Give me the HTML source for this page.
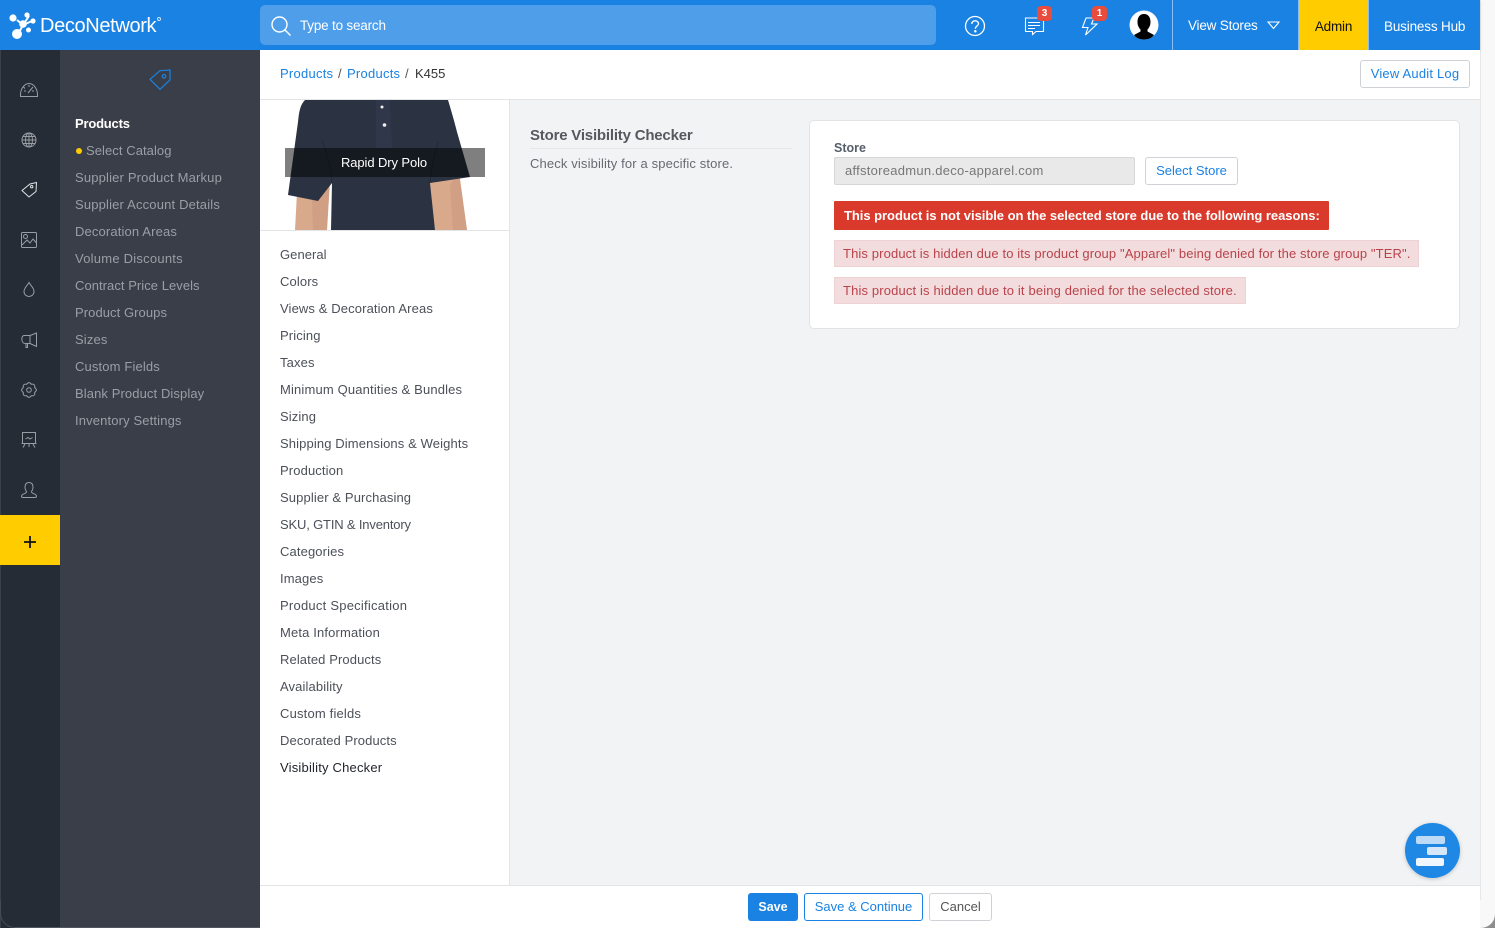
<!DOCTYPE html>
<html><head><meta charset="utf-8"><style>
html,body{margin:0;padding:0;width:1495px;height:928px;overflow:hidden;background:#f8f8f8;font-family:"Liberation Sans",sans-serif;font-size:13px;color:#4a4f57}
div,a,span{position:absolute;white-space:nowrap}
.s{left:75px;color:#9b9ea6;height:18px;line-height:18px;letter-spacing:.14px}
.n{left:280px;color:#4c5058;height:18px;line-height:18px;letter-spacing:.12px}
svg{position:absolute;overflow:visible}
.b{color:#1a82e2;background:#fff;border:1px solid #cfd2d6;border-radius:3px;box-sizing:border-box;text-align:center}
</style></head><body>
<div style="left:0;top:0;width:1480px;height:928px;background:#f2f3f5"></div>
<div style="left:1480px;top:0;width:15px;height:928px;background:#f8f8f8;border-left:1px solid #e8e8e8;box-sizing:border-box"></div>
<div style="left:1440px;top:888px;width:40px;height:40px;background:#fff"></div>
<div style="left:1470px;top:900px;width:25px;height:28px;background:#8e8e8e;"></div>
<div style="left:1470px;top:900px;width:25px;height:28px;background:#f8f8f8;border-bottom-right-radius:14px"></div>

<div style="left:0;top:0;width:1480px;height:50px;background:#1a82e2;box-shadow:0 1px 3px rgba(0,0,0,.15)"></div>
<svg style="left:9px;top:11px" width="28" height="29" viewBox="0 0 28 29" fill="#fff"><path d="M8 9L14 14M20 5L14 14M23 10L14 14M8 25L14 14" stroke="#fff" stroke-width="2"/><circle cx="4" cy="7" r="3.6"/><circle cx="18" cy="4" r="2.6"/><circle cx="24" cy="10" r="2.6"/><circle cx="14" cy="13" r="3.8"/><circle cx="19.500" cy="19" r="2.5"/><circle cx="8" cy="23" r="5"/></svg>
<div style="left:40px;top:13px;height:26px;line-height:26px;font-size:20px;color:#fff;letter-spacing:-.35px">DecoNetwork</div>
<div style="left:157px;top:17px;width:2px;height:2px;border:.5px solid #cfe4fa;border-radius:50%"></div>
<div style="left:260px;top:5px;width:676px;height:40px;background:#4f9eea;border-radius:5px"></div>
<svg style="left:270px;top:15px" width="22" height="22" fill="none" stroke="#fff" stroke-width="1.4"><circle cx="9.500" cy="9.500" r="7.500"/><path d="M15 15L20.500 20.500"/></svg>
<div style="left:300px;top:16px;height:20px;line-height:20px;color:#fff;font-size:13.500px;letter-spacing:-.2px">Type to search</div>

<svg style="left:964px;top:15px" width="22" height="22" fill="none" stroke="#fff" stroke-width="1.3"><circle cx="11" cy="11" r="9.500"/><path d="M7.800 9C8 6.800 9.500 5.800 11.200 5.800C13 5.800 14.500 7 14.500 8.700C14.500 11 11.300 11 11.300 13.800"/><circle cx="11.300" cy="16.300" r=".6" fill="#fff"/></svg>
<svg style="left:1024px;top:15px" width="22" height="21" fill="none" stroke="#fff" stroke-width="1.1"><path d="M1.500 3H19.500V16.500H12L8.500 19.500V16.500H1.500Z"/><path d="M4 7.500H16M4 10.500H16M4 13.500H11"/></svg>
<div style="left:1037px;top:6px;width:15px;height:15px;background:#e74c3c;border-radius:4px;color:#fff;font-size:10px;font-weight:bold;text-align:center;line-height:15px">3</div>
<svg style="left:1081px;top:15px" width="22" height="21" fill="none" stroke="#fff" stroke-width="1.1"><path d="M5 3H13L10.500 9H16L4.500 20L7 12.500H1.500Z"/></svg>
<div style="left:1092px;top:6px;width:15px;height:15px;background:#e74c3c;border-radius:4px;color:#fff;font-size:10px;font-weight:bold;text-align:center;line-height:15px">1</div>
<svg style="left:1129px;top:10px" width="30" height="30"><circle cx="15" cy="15" r="14.500" fill="#fff"/><path d="M15 4C10.500 4 8.500 7.500 8.500 12C8.500 15.500 10 18 11.500 19.500V21.500L5 25C7 28 11 29.500 15 29.500S23 28 25 25L18.500 21.500V19.500C20 18 21.500 15.500 21.500 12C21.500 7.500 19.500 4 15 4Z" fill="#000"/></svg>
<div style="left:1172px;top:0;width:1px;height:50px;background:#8bbdf0"></div>
<div style="left:1188px;top:16px;height:20px;line-height:20px;color:#fff;font-size:13.500px;letter-spacing:-.2px">View Stores</div>
<svg style="left:1267px;top:21px" width="13" height="9" fill="none" stroke="#fff" stroke-width="1.1"><path d="M1 1H12L6.500 7.500Z"/></svg>
<div style="left:1298px;top:0;width:71px;height:50px;background:#ffcc00;border-right:1px solid #8bbdf0;border-left:1px solid #8bbdf0;box-sizing:border-box"></div>
<div style="left:1298px;top:17px;width:71px;text-align:center;height:20px;line-height:20px;color:#111;font-size:13.500px;letter-spacing:-.2px">Admin</div>
<div style="left:1384px;top:17px;height:20px;line-height:20px;color:#fff;font-size:13.500px;letter-spacing:-.17px">Business Hub</div>

<div style="left:0;top:50px;width:60px;height:878px;background:#252c36"></div>
<div style="left:0;top:50px;width:1px;height:878px;background:#3a404a"></div>
<div style="left:60px;top:50px;width:200px;height:878px;background:#3a3e48"></div>
<svg style="left:0;top:900px" width="60" height="28" fill="none"><path d="M.5 0V13C.5 21 7 27.500 15 27.500" stroke="#454a53"/></svg>
<div style="left:15px;top:927px;width:245px;height:1px;background:#53565d"></div>
<svg style="left:0;top:50px" width="60" height="500" fill="none" stroke="#9a9da4" stroke-width="1">
<path d="M20.500 46.500C20 38 25 33.500 29 33.500C33 33.500 38 38 37.500 46.500Z"/><path d="M28 43L33 37M24 41H26M32 41H34M29 35V37M23.500 37L25 38.500"/>
<circle cx="29" cy="90" r="7"/><path d="M22 90H36M23 86.500H35M23 93.500H35M29 83V97"/><ellipse cx="29" cy="90" rx="3.500" ry="7"/>
<path d="M22 140.500L30 134L36.500 132.500L36 141.500L29 147Z" stroke="#dfe1e4"/><circle cx="31.700" cy="136.700" r="1.200" stroke="#dfe1e4"/>
<rect x="21.500" y="182.500" width="15" height="15" rx="1"/><circle cx="25.500" cy="186.500" r="2"/><path d="M22 195L27 190L30 193L33 189L36.500 193"/>
<path d="M29 232.500C27 236 24 238 24 241.500C24 244.500 26.500 246.500 29 246.500C31.500 246.500 34 244.500 34 241.500C34 238 31 236 29 232.500Z"/>
<path d="M24 285.500H30V293.500H25C21 293.500 21 285.500 24 285.500ZM30 285.500L36.500 283V296.500L30 293.500ZM26 294V297.500H27.500V294"/>
<circle cx="29" cy="340" r="2.300"/><path d="M34.730 342.370Q35.360 346.360 31.370 345.730Q29 349 26.630 345.730Q22.640 346.360 23.270 342.370Q20 340 23.270 337.630Q22.640 333.640 26.630 334.270Q29 331 31.370 334.270Q35.360 333.640 34.730 337.630Q38 340 34.730 342.370Z"/>
<path d="M22.500 382.500H35.500V393.500H22.500ZM21.500 393.500H36.500M25 394L23 397.500M33 394L35 397.500M29 394V397M25.500 389L28 387.500L30 389L32.500 387.500"/>
<path d="M29 432.500C26 432.500 25 435 25 437.500C25 440 26.500 441 26.500 442C26.500 443.500 21.500 444 21.500 446C21.500 447 22 447.500 23 447.500H35C36 447.500 36.500 447 36.500 446C36.500 444 31.500 443.500 31.500 442C31.500 441 33 440 33 437.500C33 435 32 432.500 29 432.500Z"/>
</svg>
<div style="left:0;top:515px;width:60px;height:50px;background:#ffcc00"></div>
<svg style="left:24px;top:536px" width="12" height="12"><path d="M6 0V12M0 6H12" stroke="#111" stroke-width="1.800"/></svg>
<svg style="left:149px;top:69px" width="22" height="22" fill="none" stroke="#1a82e2" stroke-width="1.200"><path d="M1 10.300L11 1.700L21 1L21 11L11 20.300Z"/><circle cx="15" cy="7.300" r="1.800"/></svg>

<div class="s" style="top:115px;color:#fff;font-weight:bold;letter-spacing:-.2px">Products</div>
<div style="left:76px;top:148px;width:6px;height:6px;border-radius:50%;background:#ffcc00"></div>
<div class="s" style="left:86px;top:142px;letter-spacing:.07px">Select Catalog</div>
<div class="s" style="top:169px;letter-spacing:.17px">Supplier Product Markup</div>
<div class="s" style="top:196px;letter-spacing:.17px">Supplier Account Details</div>
<div class="s" style="top:223px">Decoration Areas</div>
<div class="s" style="top:250px;letter-spacing:.24px">Volume Discounts</div>
<div class="s" style="top:277px;letter-spacing:.05px">Contract Price Levels</div>
<div class="s" style="top:304px;letter-spacing:.07px">Product Groups</div>
<div class="s" style="top:331px">Sizes</div>
<div class="s" style="top:358px">Custom Fields</div>
<div class="s" style="top:385px;letter-spacing:.1px">Blank Product Display</div>
<div class="s" style="top:412px">Inventory Settings</div>

<div style="left:260px;top:50px;width:1220px;height:50px;background:#fff;border-bottom:1px solid #e3e4e6;box-sizing:border-box"></div>
<div style="left:280px;top:65px;height:18px;line-height:18px;color:#1a82e2;letter-spacing:.25px">Products</div>
<div style="left:338px;top:65px;height:18px;line-height:18px;color:#555">/</div>
<div style="left:347px;top:65px;height:18px;line-height:18px;color:#1a82e2;letter-spacing:.25px">Products</div>
<div style="left:405px;top:65px;height:18px;line-height:18px;color:#555">/</div>
<div style="left:415px;top:65px;height:18px;line-height:18px;color:#333">K455</div>
<div class="b" style="left:1360px;top:60px;width:110px;height:28px;line-height:26px;letter-spacing:.2px">View Audit Log</div>

<div style="left:260px;top:100px;width:250px;height:785px;background:#fff;border-right:1px solid #e3e4e6;box-sizing:border-box"></div>
<svg style="left:260px;top:100px" width="249" height="130">
<path d="M37 92L35 130H67L70 80ZM168 78L175 130H207L199 72Z" fill="#d9a98c"/>
<path d="M52 100L53 130H67L70 80ZM190 85L193 130H207L199 72Z" fill="#c99679" opacity=".5"/>
<path d="M45 0C40 5 39 12 38 22L28 95L58 101L72 83L71 130H175L170 83L210 77L197 32C194 20 191 10 188 0Z" fill="#2b3241"/>
<path d="M72 83C71 70 68 55 62 40M170 83C171 70 174 55 178 42" stroke="#232936" fill="none"/>
<path d="M116 0V48H132L130 0Z" fill="#30374a"/>
<circle cx="122" cy="7" r="1.500" fill="#eee"/><circle cx="124.500" cy="25" r="1.800" fill="#eee"/>
</svg>
<div style="left:285px;top:148px;width:198px;height:29px;background:rgba(0,0,0,.5);color:#fff;text-align:center;line-height:29px;font-size:13px;letter-spacing:-.1px;padding-right:2px">Rapid Dry Polo</div>
<div style="left:260px;top:230px;width:249px;height:1px;background:#e3e4e6"></div>

<div class="n" style="top:246px;letter-spacing:.05px">General</div>
<div class="n" style="top:273px">Colors</div>
<div class="n" style="top:300px">Views &amp; Decoration Areas</div>
<div class="n" style="top:327px">Pricing</div>
<div class="n" style="top:354px">Taxes</div>
<div class="n" style="top:381px;letter-spacing:.16px">Minimum Quantities &amp; Bundles</div>
<div class="n" style="top:408px">Sizing</div>
<div class="n" style="top:435px">Shipping Dimensions &amp; Weights</div>
<div class="n" style="top:462px">Production</div>
<div class="n" style="top:489px">Supplier &amp; Purchasing</div>
<div class="n" style="top:516px;letter-spacing:-.17px">SKU, GTIN &amp; Inventory</div>
<div class="n" style="top:543px">Categories</div>
<div class="n" style="top:570px">Images</div>
<div class="n" style="top:597px;letter-spacing:.24px">Product Specification</div>
<div class="n" style="top:624px;letter-spacing:.15px">Meta Information</div>
<div class="n" style="top:651px;letter-spacing:.1px">Related Products</div>
<div class="n" style="top:678px">Availability</div>
<div class="n" style="top:705px;letter-spacing:.18px">Custom fields</div>
<div class="n" style="top:732px;letter-spacing:.1px">Decorated Products</div>
<div class="n" style="top:759px;color:#22262c;letter-spacing:.2px">Visibility Checker</div>

<div style="left:530px;top:126px;height:20px;line-height:20px;font-size:15px;font-weight:bold;color:#55595f;letter-spacing:-.2px">Store Visibility Checker</div>
<div style="left:530px;top:148px;width:262px;height:1px;background:#e6e7e9"></div>
<div style="left:530px;top:155px;height:18px;line-height:18px;color:#666a70;letter-spacing:.135px">Check visibility for a specific store.</div>

<div style="left:809px;top:120px;width:651px;height:209px;background:#fff;border:1px solid #e2e3e5;border-radius:5px;box-sizing:border-box"></div>
<div style="left:834px;top:139px;height:18px;line-height:18px;color:#57606a;font-weight:bold;font-size:12.500px">Store</div>
<div style="left:834px;top:157px;width:301px;height:28px;background:#e9e9e9;border:1px solid #d6d6d6;border-radius:2px;box-sizing:border-box;padding-left:10px;line-height:26px;color:#777;letter-spacing:.27px">affstoreadmun.deco-apparel.com</div>
<div class="b" style="left:1145px;top:157px;width:93px;height:28px;line-height:26px">Select Store</div>
<div style="left:834px;top:201px;width:495px;height:29px;background:#d93a2b;border-radius:1px;color:#fff;font-weight:bold;line-height:29px;padding-left:10px;box-sizing:border-box;letter-spacing:-.04px">This product is not visible on the selected store due to the following reasons:</div>
<div style="left:834px;top:240px;width:585px;height:27px;background:#f3dcdd;border:1px solid #efd2d4;box-sizing:border-box;color:#b9434b;line-height:25px;padding-left:8px;letter-spacing:.125px">This product is hidden due to its product group "Apparel" being denied for the store group "TER".</div>
<div style="left:834px;top:277px;width:412px;height:27px;background:#f3dcdd;border:1px solid #efd2d4;box-sizing:border-box;color:#b9434b;line-height:25px;padding-left:8px;letter-spacing:.145px">This product is hidden due to it being denied for the selected store.</div>

<div style="left:260px;top:885px;width:1220px;height:43px;background:#fff;border-top:1px solid #e3e4e6;box-sizing:border-box"></div>
<div style="left:748px;top:893px;width:50px;height:28px;background:#1a82e2;border-radius:3px;color:#fff;font-weight:bold;font-size:12.500px;text-align:center;line-height:28px">Save</div>
<div class="b" style="left:804px;top:893px;width:119px;height:28px;line-height:26px;border-color:#1a82e2">Save &amp; Continue</div>
<div class="b" style="left:929px;top:893px;width:63px;height:28px;line-height:26px;color:#555">Cancel</div>

<div style="left:1405px;top:823px;width:55px;height:55px;border-radius:50%;background:#1f88e5;box-shadow:0 1px 4px rgba(0,0,0,.2)"></div>
<div style="left:1416px;top:836px;width:29px;height:8px;border-radius:2px;background:#bddaf6"></div>
<div style="left:1427px;top:847px;width:20px;height:8px;border-radius:2px;background:#d5e7f9"></div>
<div style="left:1416px;top:858px;width:28px;height:8px;border-radius:2px;background:#f0f6fd"></div>
</body></html>
